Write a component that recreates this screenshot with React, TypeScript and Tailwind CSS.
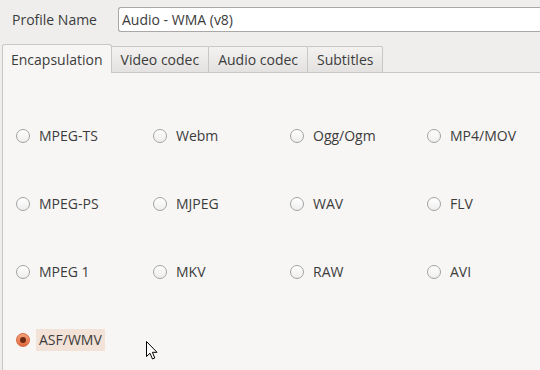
import React from "react";

const font = { fontFamily: '"Open Sans", "DejaVu Sans", sans-serif' };

function Radio({ label, checked }: { label: string; checked?: boolean }) {
  return (
    <div className="flex items-center h-[68px]">
      {checked ? (
        <span className="w-[14px] h-[14px] rounded-full border border-[#d9693f] bg-[linear-gradient(#f4a07c,#e2693d)] flex items-center justify-center shrink-0">
          <span className="w-[6px] h-[6px] rounded-full bg-[#6b2a12]" />
        </span>
      ) : (
        <span className="w-[14px] h-[14px] rounded-full border border-[#a3a3a1] bg-[linear-gradient(#ffffff,#efeeed)] shrink-0" />
      )}
      <span
        className={
          "ml-[6px] px-[3px] leading-[22px] text-[14px] text-[#3c3c3c] " +
          (checked ? "bg-[#f3e2d8]" : "")
        }
      >
        {label}
      </span>
    </div>
  );
}

function Tab({ label, active }: { label: string; active?: boolean }) {
  if (active) {
    return (
      <div className="h-[29px] px-[8px] flex items-center border border-b-0 border-[#c8c7c5] rounded-t-[3px] bg-[#f7f6f5] text-[14px] text-[#3c3c3c] relative z-10 -mb-px">
        {label}
      </div>
    );
  }
  return (
    <div className="h-[26px] px-[9px] flex items-center border border-[#c8c7c5] border-b-0 rounded-t-[2px] bg-[linear-gradient(#f3f2f1,#e3e2e0)] text-[14px] text-[#3c3c3c] -ml-px">
      {label}
    </div>
  );
}

export default function App() {
  const items = [
    "MPEG-TS", "Webm", "Ogg/Ogm", "MP4/MOV",
    "MPEG-PS", "MJPEG", "WAV", "FLV",
    "MPEG 1", "MKV", "RAW", "AVI",
  ];
  return (
    <div className="w-[540px] h-[370px] overflow-hidden bg-[#efeeed] relative" style={font}>
      <div className="flex items-center h-[38px] pt-[1px]">
        <span className="w-[118px] pl-[12px] text-[14px] text-[#3c3c3c]">Profile Name</span>
        <div className="flex-1 h-[25px] border border-[#a9a8a6] border-r-0 rounded-l-[3px] bg-white flex items-center pl-[3px] text-[14px] text-[#3c3c3c]">
          Audio - WMA (v8)
        </div>
      </div>
      <div className="flex items-end pl-[2px] mt-[6px]">
        <Tab label="Encapsulation" active />
        <Tab label="Video codec" />
        <Tab label="Audio codec" />
        <Tab label="Subtitles" />
      </div>
      <div className="ml-[2px] border-l border-t border-[#c8c7c5] bg-[#f7f6f5] h-[300px] pl-[13px] pt-[29px]">
        <div className="grid grid-cols-[137px_137px_137px_137px]">
          {items.map((l) => (
            <Radio key={l} label={l} />
          ))}
          <Radio label="ASF/WMV" checked />
        </div>
      </div>
      <svg className="absolute left-[146px] top-[341px]" width="14" height="21" viewBox="0 0 14 21">
        <path d="M0.5 0.5 L0.5 15.5 L4 12.2 L6.5 18 L8.8 17 L6.4 11.3 L11 11.3 Z" fill="#ffffff" stroke="#000000" strokeWidth="1" strokeLinejoin="round" />
      </svg>
    </div>
  );
}
